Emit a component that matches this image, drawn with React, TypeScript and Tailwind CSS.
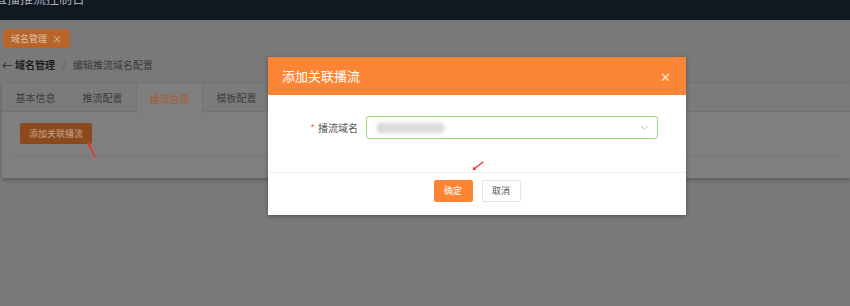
const tabs = ["基本信息", "推流配置", "播流信息", "模板配置"];

export default function App() {
  return (
    <div className="relative w-[850px] h-[306px] overflow-hidden bg-[#797979] font-['Noto_Sans_CJK_SC','Noto_Sans',sans-serif]">
      {/* top bar, title scrolled half out of view */}
      <div className="h-[20px] bg-[#121822] overflow-hidden">
        <span className="block -mt-[10px] text-[13px] leading-[16px] text-[#a7abb2] whitespace-nowrap -ml-[6px]">
          直播推流控制台
        </span>
      </div>

      {/* tag bar */}
      <div className="flex pt-[9px] px-[3px]">
        <div className="flex items-center gap-[5px] h-[19px] px-[8px] rounded-[2px] bg-[#b8652b] text-[9px] leading-none text-[#dcc2ac]">
          <span>域名管理</span>
          <span className="text-[10px] leading-none">×</span>
        </div>
      </div>

      {/* breadcrumb */}
      <div className="flex items-center h-[20px] mt-[7px] pl-[2px] text-[10px] leading-none">
        <span className="text-[#2a2a2a] text-[11px] leading-none mr-[2px]">←</span>
        <span className="font-bold text-[#1c1c1c]">域名管理</span>
        <span className="mx-[7px] text-[#5e5e5e]">/</span>
        <span className="text-[#3a3a3a]">编辑推流域名配置</span>
      </div>

      {/* card with tabs */}
      <div className="ml-[2px] mt-[9px] h-[94px] bg-[#7f7f7f] shadow-[0_2px_4px_rgba(0,0,0,0.25)]">
        <div className="flex h-[28px] bg-[#7a7b7c] border-b border-[#727272]">
          {tabs.map((t, i) => (
            <div
              key={t}
              className={
                i === 2
                  ? "w-[67px] flex items-center justify-center text-[10px] text-[#a95b29] bg-[#7f7f7f] border-x border-[#727272] h-[29px]"
                  : "w-[67px] flex items-center justify-center text-[10px] text-[#3d3d3d]"
              }
            >
              {t}
            </div>
          ))}
        </div>
        <div className="relative px-[18px] pt-[11px]">
          <button className="relative block h-[21px] w-[72px] rounded-[2px] bg-[#8b4a1e] text-[9px] text-[#c9a68c]">
            添加关联播流
          </button>
          <svg className="absolute left-[84px] top-[30px]" width="14" height="16" viewBox="0 0 14 16" fill="none">
            <path d="M3 2 L9 15" stroke="#ff2a2a" strokeWidth="1.3" strokeLinecap="round" />
            <path d="M1.5 0.5 L5.6 3 L2.6 5 Z" fill="#ff2a2a" />
          </svg>
          <div className="mt-[12px] -mx-[7px] border-t border-[#777777]" />
        </div>
      </div>

      {/* dialog */}
      <div className="absolute left-[268px] top-[57px] w-[418px] h-[158px] bg-white shadow-[0_1px_4px_rgba(0,0,0,0.35)]">
        <div className="flex items-center justify-between h-[38px] bg-[#fc8535] pl-[14px] pr-[15px]">
          <span className="text-[13px] text-white">添加关联播流</span>
          <span className="text-[13px] leading-none text-[#fde2cf]">✕</span>
        </div>
        <div className="flex items-center h-[23px] mt-[21px]">
          <label className="w-[98px] text-right text-[10px] text-[#555] pr-[8px]">
            <span className="text-[#f56c6c] mr-[3px]">*</span>播流域名
          </label>
          <div className="relative flex items-center w-[292px] h-[23px] rounded-[3px] border border-[#9bd87a] pl-[10px] pr-[8px]">
            <div className="w-[67px] h-[10px] rounded-[3px] bg-[#dcdcdc] blur-[1.5px] shadow-[0_0_6px_#e8f5e0]" />
            <svg className="ml-auto" width="9" height="6" viewBox="0 0 9 6" fill="none">
              <path d="M1 1 L4.5 4.5 L8 1" stroke="#c0c4cc" strokeWidth="1" />
            </svg>
          </div>
        </div>
        <div className="relative mt-[33px] border-t border-[#f0f0f0] flex justify-center gap-[9px] pt-[7px]">
          <button className="w-[39px] h-[22px] rounded-[2px] bg-[#fc8535] text-[9px] text-white">确定</button>
          <button className="w-[39px] h-[22px] rounded-[2px] bg-white border border-[#e4e4e4] text-[9px] text-[#555]">
            取消
          </button>
        </div>
        <svg className="absolute left-[204px] top-[104px]" width="12" height="10" viewBox="0 0 12 10" fill="none">
          <path d="M11 1 L2 8" stroke="#ff2a2a" strokeWidth="1.2" strokeLinecap="round" />
          <path d="M0.5 9.3 L1.6 5.6 L4.2 8.4 Z" fill="#ff2a2a" />
        </svg>
      </div>
    </div>
  );
}
